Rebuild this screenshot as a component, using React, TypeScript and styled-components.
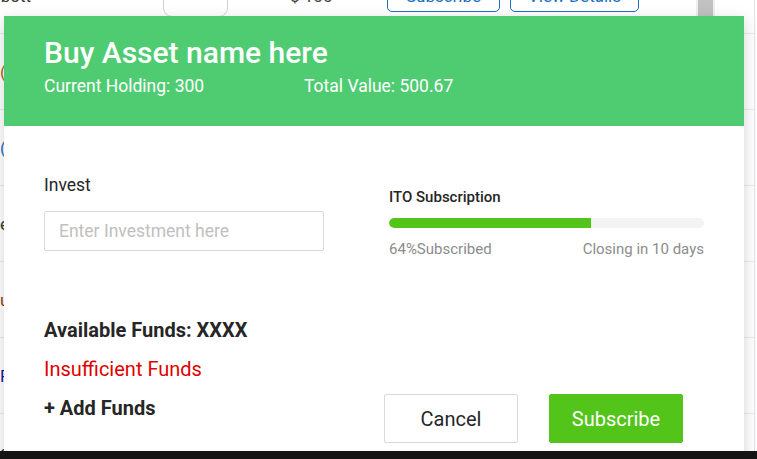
import styled, { createGlobalStyle } from "styled-components";

type BgRow = {
  glyph: string;
  color: string;
};

const GlobalStyle = createGlobalStyle`
  html, body {
    margin: 0;
    padding: 0;
    background: #ffffff;
    font-family: Roboto, "Liberation Sans", Arial, sans-serif;
    overflow: hidden;
  }
`;

const Page = styled.div`
  width: 757px;
  height: 459px;
  display: flex;
  flex-direction: column;
  overflow: hidden;
`;

const Viewport = styled.div`
  position: relative;
  flex: 1;
  overflow: hidden;
  background: #ffffff;
`;

const TableArea = styled.div`
  width: 754px;
  height: 100%;
  border-right: 1px solid #e2e2ea;
  overflow: hidden;
  position: relative;
`;

const TableScroll = styled.div`
  margin: -42px 0 0 -20px;
`;

const Row = styled.div`
  height: 75px;
  display: flex;
  align-items: center;
  border-bottom: 1px solid #ebebeb;
  font-size: 17px;
  color: #333;
`;

const NameCell = styled.div<{ $color: string }>`
  width: 183px;
  flex-shrink: 0;
  color: ${(p) => p.$color};
  white-space: nowrap;
`;

const Pill = styled.div`
  width: 63px;
  height: 34px;
  border: 1px solid #d4d4d4;
  border-radius: 9px;
  margin-top: 6px;
`;

const Price = styled.div`
  margin-left: 62px;
  width: 56px;
  color: #444;
`;

const OutlineBtn = styled.div<{ $w: number }>`
  width: ${(p) => p.$w}px;
  height: 32px;
  box-sizing: border-box;
  border: 1.5px solid #1a6fc2;
  border-radius: 5px;
  color: #1a6fc2;
  display: flex;
  align-items: center;
  justify-content: center;
  margin-left: 41px;
  & + & {
    margin-left: 10px;
  }
`;

const ScrollTrack = styled.div`
  position: absolute;
  top: 0;
  left: 696px;
  width: 19px;
  height: 100%;
  background: #efefef;
  display: flex;
  justify-content: center;
`;

const ScrollThumb = styled.div`
  width: 15px;
  height: 60px;
  background: #c1c1c1;
`;

const Modal = styled.div`
  position: absolute;
  top: 16px;
  left: 4px;
  width: 740px;
  height: 470px;
  background: #ffffff;
  box-shadow: 0 4px 14px rgba(0, 0, 0, 0.18);
`;

const Header = styled.div`
  background: #4fcc72;
  height: 110px;
  box-sizing: border-box;
  padding: 19px 40px 0;
  color: #ffffff;
`;

const Title = styled.h1`
  margin: 0;
  font-size: 30px;
  line-height: 36px;
  font-weight: 500;
`;

const HeaderStats = styled.div`
  margin-top: 3px;
  display: grid;
  grid-template-columns: 260px auto;
  font-size: 17.5px;
  line-height: 24px;
`;

const Body = styled.div`
  padding: 47px 40px 0;
`;

const TopGrid = styled.div`
  display: grid;
  grid-template-columns: 280px 315px;
  justify-content: space-between;
`;

const Label = styled.div`
  font-size: 17.5px;
  line-height: 24px;
  color: #262626;
`;

const Input = styled.input`
  display: block;
  width: 280px;
  height: 40px;
  margin-top: 14px;
  box-sizing: border-box;
  border: 1px solid #d9d9d9;
  border-radius: 2px;
  padding: 0 14px;
  font-family: inherit;
  font-size: 17.5px;
  color: #262626;
  outline: none;
  &::placeholder {
    color: #bfbfbf;
  }
`;

const Progress = styled.div`
  margin-top: 14px;
`;

const ProgressTitle = styled.div`
  font-size: 15px;
  line-height: 20px;
  font-weight: 500;
  color: #262626;
`;

const Track = styled.div`
  margin-top: 11px;
  height: 10px;
  border-radius: 5px;
  background: #f3f3f3;
  overflow: hidden;
`;

const Fill = styled.div`
  height: 100%;
  background: #52c41a;
  border-radius: 5px 0 0 5px;
`;

const ProgressMeta = styled.div`
  margin-top: 11px;
  display: flex;
  justify-content: space-between;
  font-size: 15px;
  line-height: 20px;
  color: #8c8c8c;
`;

const Footer = styled.div`
  margin-top: 59px;
  display: flex;
  justify-content: space-between;
  align-items: flex-start;
  padding-right: 21px;
`;

const FundsStack = styled.div`
  display: flex;
  flex-direction: column;
  gap: 15px;
`;

const FundsLine = styled.div<{ $bold?: boolean; $error?: boolean }>`
  font-size: 20px;
  line-height: 24px;
  font-weight: ${(p) => (p.$bold ? 700 : 400)};
  color: ${(p) => (p.$error ? "#e00000" : "#262626")};
`;

const ButtonRow = styled.div`
  margin-top: 76px;
  display: flex;
  gap: 31px;
`;

const ActionButton = styled.button<{ $primary?: boolean }>`
  width: 134px;
  height: 49px;
  box-sizing: border-box;
  border-radius: 2px;
  border: 1px solid ${(p) => (p.$primary ? "#52c41a" : "#d9d9d9")};
  background: ${(p) => (p.$primary ? "#52c41a" : "#ffffff")};
  color: ${(p) => (p.$primary ? "#ffffff" : "#262626")};
  font-family: inherit;
  font-size: 20px;
  cursor: pointer;
`;

const BottomBar = styled.div`
  height: 8px;
  background: #141414;
  flex-shrink: 0;
`;

const bgRows: BgRow[] = [
  { glyph: "(USDT) Tether", color: "#b5651d" },
  { glyph: "(BTC) Bitcoin", color: "#1a6fc2" },
  { glyph: "ethereum", color: "#333" },
  { glyph: "uniswap", color: "#8b4513" },
  { glyph: "Filecoin", color: "#1a1aa0" },
  { glyph: "chainlink", color: "#333" },
];

function App() {
  const subscribed = 64;

  return (
    <Page>
      <GlobalStyle />
      <Viewport>
        <TableArea>
          <TableScroll>
            <Row>
              <NameCell $color="#333">Abbott</NameCell>
              <Pill />
              <Price>$ 100</Price>
              <OutlineBtn $w={113}>Subscribe</OutlineBtn>
              <OutlineBtn $w={129}>View Details</OutlineBtn>
            </Row>
            {bgRows.map((r) => (
              <Row key={r.glyph}>
                <NameCell $color={r.color}>
                  <span style={{ paddingLeft: 20 }}>{r.glyph}</span>
                </NameCell>
              </Row>
            ))}
          </TableScroll>
          <ScrollTrack>
            <ScrollThumb />
          </ScrollTrack>
        </TableArea>

        <Modal>
          <Header>
            <Title>Buy Asset name here</Title>
            <HeaderStats>
              <span>Current Holding: 300</span>
              <span>Total Value: 500.67</span>
            </HeaderStats>
          </Header>
          <Body>
            <TopGrid>
              <div>
                <Label>Invest</Label>
                <Input placeholder="Enter Investment here" />
              </div>
              <Progress>
                <ProgressTitle>ITO Subscription</ProgressTitle>
                <Track>
                  <Fill style={{ width: `${subscribed}%` }} />
                </Track>
                <ProgressMeta>
                  <span>{subscribed}%Subscribed</span>
                  <span>Closing in 10 days</span>
                </ProgressMeta>
              </Progress>
            </TopGrid>
            <Footer>
              <FundsStack>
                <FundsLine $bold>Available Funds: XXXX</FundsLine>
                <FundsLine $error>Insufficient Funds</FundsLine>
                <FundsLine $bold>+ Add Funds</FundsLine>
              </FundsStack>
              <ButtonRow>
                <ActionButton>Cancel</ActionButton>
                <ActionButton $primary>Subscribe</ActionButton>
              </ButtonRow>
            </Footer>
          </Body>
        </Modal>
      </Viewport>
      <BottomBar />
    </Page>
  );
}

export default App;
